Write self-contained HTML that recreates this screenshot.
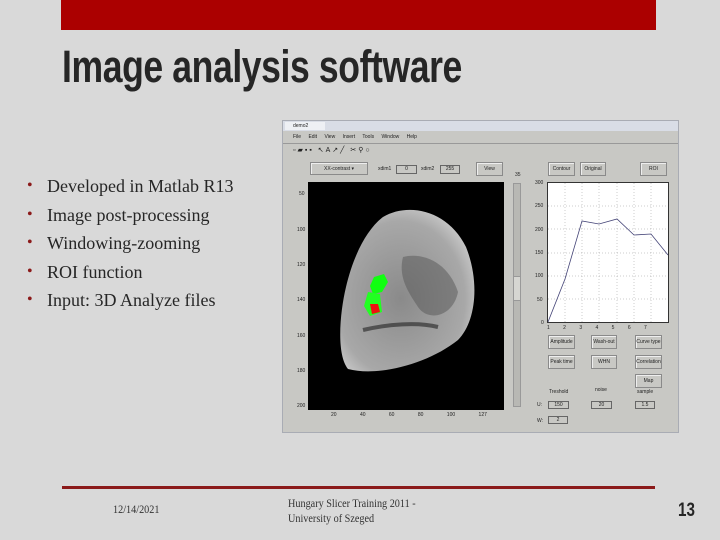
<!DOCTYPE html>
<html><head><meta charset="utf-8"><style>
*{margin:0;padding:0;box-sizing:border-box}
body{width:720px;height:540px;background:#d9d9d9;position:relative;overflow:hidden;font-family:"Liberation Serif",serif}
.a{position:absolute}
.title{left:62px;top:41px;font-family:"Liberation Sans Narrow","Liberation Sans",sans-serif;font-weight:bold;font-size:45px;color:#262626;transform:scaleX(0.79);transform-origin:left top;letter-spacing:-0.5px;white-space:nowrap}
ul{position:absolute;left:27px;top:172px;list-style:none;font-size:18px;color:#262626;line-height:28.6px}
ul li:before{content:"•";color:#8b1a1a;position:absolute;left:0;font-size:16px}
ul li{padding-left:20px;position:relative}
#w{left:282px;top:120px;width:397px;height:313px;background:#c8c8c4;border:1px solid #a9acb4;font-family:"Liberation Sans",sans-serif;font-size:5px;color:#222}
.b{position:absolute;background:#c8c8c4;border:1px solid #8a8a8a;box-shadow:inset 1px 1px #eee;text-align:center;font-size:5px;line-height:12px}
.e{position:absolute;background:#c8c8c4;border:1px solid #666;text-align:center;font-size:5px;line-height:7px}
.t{position:absolute;font-size:5px}
</style></head><body>
<div class="a" style="left:61px;top:0;width:595px;height:30px;background:#ab0000"></div>
<div class="a title">Image analysis software</div>
<ul>
<li>Developed in Matlab R13</li>
<li>Image post-processing</li>
<li>Windowing-zooming</li>
<li>ROI function</li>
<li>Input: 3D Analyze files</li>
</ul>
<div class="a" id="w">
<div class="a" style="left:0;top:0;width:395px;height:10px;background:#d9dde6"></div>
<div class="a" style="left:2px;top:1px;width:40px;height:8px;background:#eef0f4;font-size:5px;padding-left:8px;line-height:8px">demo2</div>
<div class="t" style="left:10px;top:13px;word-spacing:6px">File Edit View Insert Tools Window Help</div>
<div class="a" style="left:0;top:22px;width:395px;height:1px;background:#999"></div>
<div class="t" style="left:10px;top:25px;font-size:7px;letter-spacing:2px">▫▰▪▪ ↖A↗╱ ✂⚲○</div>
<div class="b" style="left:27px;top:41px;width:58px;height:13px">XX-contrast ▾</div>
<div class="t" style="left:95px;top:45px">xdim1</div>
<div class="e" style="left:113px;top:44px;width:21px;height:9px">0</div>
<div class="t" style="left:138px;top:45px">xdim2</div>
<div class="e" style="left:157px;top:44px;width:20px;height:9px">255</div>
<div class="b" style="left:193px;top:41px;width:27px;height:14px">View</div>
<div class="b" style="left:265px;top:41px;width:27px;height:14px">Contour</div>
<div class="b" style="left:297px;top:41px;width:26px;height:14px">Original</div>
<div class="b" style="left:357px;top:41px;width:27px;height:14px">ROI</div>
<div class="a" style="left:25px;top:61px;width:196px;height:228px;background:#000;overflow:hidden">
<svg width="196" height="228" viewBox="0 0 196 228">
<defs><radialGradient id="g" cx="0.45" cy="0.55" r="0.6"><stop offset="0" stop-color="#8a8a8a"/><stop offset="0.8" stop-color="#a8a8a8"/><stop offset="1" stop-color="#c8c8c8"/></radialGradient></defs>
<path d="M75 35 C100 20 140 28 158 65 C172 100 168 140 150 158 C120 182 70 195 40 187 C28 172 32 130 38 105 C45 75 58 48 75 35Z" fill="url(#g)"/>
<path d="M95 75 C115 70 140 80 150 110 C145 135 120 140 110 125 C100 110 90 95 95 75Z" fill="#555" opacity="0.5"/>
<path d="M55 148 C80 142 110 140 130 145" stroke="#222" stroke-width="4" fill="none" opacity="0.6"/>
<path d="M66 95 L76 92 L80 100 L74 110 L65 112 L62 104Z" fill="#1f1"/>
<path d="M60 110 L72 112 L74 130 L62 134 L56 124Z" fill="#2f2"/>
<path d="M62 122 L70 122 L72 130 L64 132Z" fill="#e11"/>
</svg></div>
<div class="t" style="left:16px;top:70px">50</div><div class="t" style="left:14px;top:106px">100</div><div class="t" style="left:14px;top:141px">120</div><div class="t" style="left:14px;top:176px">140</div><div class="t" style="left:14px;top:212px">160</div><div class="t" style="left:14px;top:247px">180</div><div class="t" style="left:14px;top:282px">200</div>
<div class="t" style="left:48px;top:291px;word-spacing:22px">20 40 60 80 100 127</div>
<div class="t" style="left:232px;top:51px">35</div>
<div class="a" style="left:230px;top:62px;width:8px;height:224px;background:#b8b8b4;border:1px solid #999"></div>
<div class="a" style="left:230px;top:155px;width:8px;height:25px;background:#d6d6d2;border:1px solid #999"></div>
<div class="a" style="left:264px;top:61px;width:122px;height:141px;background:#fff;border:1px solid #333">
<svg width="120" height="139" viewBox="0 0 120 139">
<g stroke="#999" stroke-width="0.5" stroke-dasharray="1 2"><line x1="17" y1="0" x2="17" y2="139"/><line x1="34" y1="0" x2="34" y2="139"/><line x1="51" y1="0" x2="51" y2="139"/><line x1="69" y1="0" x2="69" y2="139"/><line x1="86" y1="0" x2="86" y2="139"/><line x1="103" y1="0" x2="103" y2="139"/><line x1="0" y1="23" x2="120" y2="23"/><line x1="0" y1="46" x2="120" y2="46"/><line x1="0" y1="70" x2="120" y2="70"/><line x1="0" y1="93" x2="120" y2="93"/><line x1="0" y1="116" x2="120" y2="116"/></g>
<polyline points="0,139 17,96 34,38 51,41 69,36 86,52 103,51 120,72" fill="none" stroke="#447" stroke-width="0.8"/>
</svg></div>
<div class="t" style="left:252px;top:59px">300</div><div class="t" style="left:252px;top:82px">250</div><div class="t" style="left:252px;top:106px">200</div><div class="t" style="left:252px;top:129px">150</div><div class="t" style="left:252px;top:152px">100</div><div class="t" style="left:254px;top:176px">50</div><div class="t" style="left:258px;top:199px">0</div>
<div class="t" style="left:264px;top:204px;word-spacing:12px">1 2 3 4 5 6 7</div>
<div class="b" style="left:265px;top:214px;width:27px;height:14px">Amplitude</div>
<div class="b" style="left:308px;top:214px;width:26px;height:14px">Wash-out</div>
<div class="b" style="left:352px;top:214px;width:27px;height:14px">Curve type</div>
<div class="b" style="left:265px;top:234px;width:27px;height:14px">Peak time</div>
<div class="b" style="left:308px;top:234px;width:26px;height:14px">WHN</div>
<div class="b" style="left:352px;top:234px;width:27px;height:14px">Correlation</div>
<div class="b" style="left:352px;top:253px;width:27px;height:14px">Map</div>
<div class="t" style="left:266px;top:268px">Treshold</div><div class="t" style="left:312px;top:266px">noise</div><div class="t" style="left:354px;top:268px">sample</div>
<div class="t" style="left:254px;top:281px">U:</div><div class="t" style="left:254px;top:297px">W:</div>
<div class="e" style="left:265px;top:280px;width:21px;height:8px">150</div>
<div class="e" style="left:308px;top:280px;width:21px;height:8px">20</div>
<div class="e" style="left:352px;top:280px;width:20px;height:8px">1.5</div>
<div class="e" style="left:265px;top:295px;width:20px;height:8px">2</div>
</div>
<div class="a" style="left:62px;top:486px;width:593px;height:3px;background:#8b1a1a"></div>
<div class="a" style="left:113px;top:502px;font-size:12px;color:#333;transform:scaleX(0.85);transform-origin:left">12/14/2021</div>
<div class="a" style="left:288px;top:496px;font-size:12px;color:#333;line-height:15px;transform:scaleX(0.85);transform-origin:left;white-space:nowrap">Hungary Slicer Training 2011 -<br>University of Szeged</div>
<div class="a" style="left:678px;top:500px;font-family:'Liberation Sans Narrow','Liberation Sans',sans-serif;font-weight:bold;font-size:19px;color:#262626;transform:scaleX(0.8);transform-origin:left">13</div>
</body></html>
